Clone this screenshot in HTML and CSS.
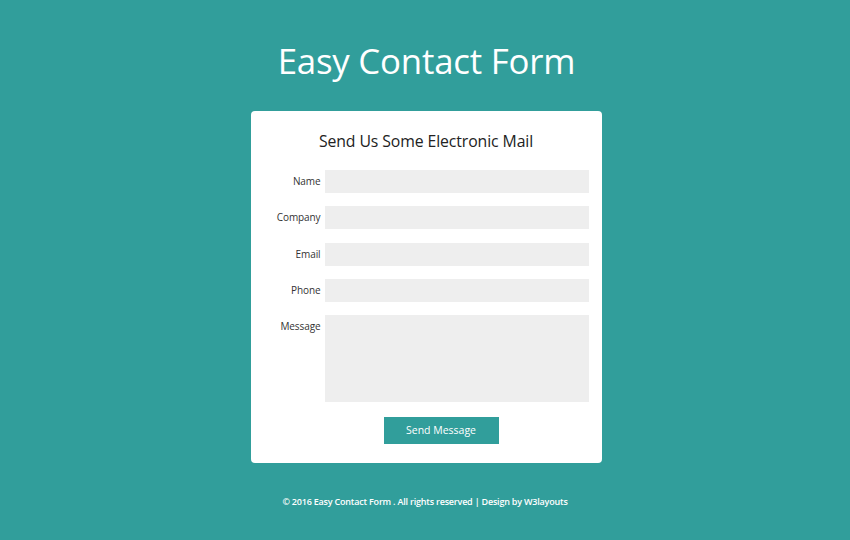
FILE: index.html
```html
<!DOCTYPE html>
<html>
<head>
<meta charset="utf-8">
<link rel="stylesheet" href="styles.css">
</head>
<body>
<h1 class="title">Easy Contact Form</h1>
<div class="card">
  <h2 class="card-title">Send Us Some Electronic Mail</h2>
  <form class="form">
    <label class="label">Name</label>
    <input class="field" type="text">
    <label class="label">Company</label>
    <input class="field" type="text">
    <label class="label">Email</label>
    <input class="field" type="text">
    <label class="label">Phone</label>
    <input class="field" type="text">
    <label class="label">Message</label>
    <textarea class="field area"></textarea>
    <div class="actions"><button class="btn" type="button">Send Message</button></div>
  </form>
</div>
<p class="footer">© 2016 Easy Contact Form . All rights reserved | Design by W3layouts</p>
</body>
</html>
```
FILE: styles.css
```css
html, body { margin: 0; padding: 0; }
body {
  background: #319e9b;
  font-family: "Open Sans", "Noto Sans", sans-serif;
  color: #333;
}
.title {
  margin: 0;
  padding-top: 38px;
  text-align: center;
  color: #fff;
  font-weight: 400;
  font-size: 34.8px;
  line-height: 46px;
  letter-spacing: -0.2px;
  padding-left: 3px;
}
.card {
  width: 351px;
  margin: 27px auto 0;
  background: #fff;
  border-radius: 4px;
  padding: 0 13px 19px 0;
  box-sizing: border-box;
  position: relative;
  left: 1px;
}
.card-title {
  margin: 0;
  padding-top: 19px;
  padding-left: 13px;
  text-align: center;
  font-weight: 400;
  font-size: 15.8px;
  line-height: 22px;
  color: #222;
  letter-spacing: -0.1px;
}
.form {
  display: grid;
  grid-template-columns: 70px 264px;
  column-gap: 4px;
  row-gap: 13.33px;
  margin-top: 18px;
}
.label {
  text-align: right;
  font-size: 10px;
  line-height: 23px;
  color: #333;
  letter-spacing: -0.1px;
}
.field {
  display: block;
  height: 23px;
  border: none;
  background: #eeeeee;
  margin: 0;
  padding: 0;
  width: 264px;
  box-sizing: border-box;
}
.area {
  height: 87px;
  resize: none;
}
.actions {
  grid-column: 2;
  padding-left: 59px;
  margin-top: 1px;
}
.btn {
  display: block;
  width: 115px;
  height: 27px;
  border: none;
  background: #319e9b;
  color: #fff;
  font-family: "Open Sans", "Noto Sans", sans-serif;
  font-size: 10.5px;
  padding: 0;
  border-radius: 0;
}
.footer {
  margin: 32px 0 0;
  text-align: center;
  color: #fff;
  font-size: 9px;
  font-weight: 600;
  line-height: 14px;
  letter-spacing: -0.2px;
}
```
